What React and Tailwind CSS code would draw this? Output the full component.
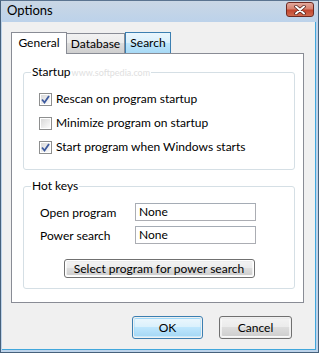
import React from "react";

const font = { fontFamily: 'Lato, "Liberation Sans", sans-serif' };

const Check = ({ checked }) => (
  <span className="w-[13px] h-[13px] border border-[#8e8f8f] bg-white p-px flex-shrink-0">
    <span className="w-full h-full flex items-center justify-center bg-gradient-to-br from-[#d9d9d9] to-[#fbfbfb]">
      {checked && (
        <svg width="9" height="9" viewBox="0 0 9 9">
          <path d="M1 4.5 L3.5 7.5 L8 1" fill="none" stroke="#3d5a9e" strokeWidth="1.8" />
        </svg>
      )}
    </span>
  </span>
);

const CheckRow = ({ checked, label }) => (
  <label className="h-[24px] flex items-center gap-[4px]">
    <Check checked={checked} />
    <span>{label}</span>
  </label>
);

const Field = ({ label, value }) => (
  <div className="h-[18px] flex items-center">
    <span className="w-[95px] pt-[2px]">{label}</span>
    <div className="w-[121px] h-[18px] border border-[#abadb3] border-t-[#a5acb5] bg-white px-[3px] flex items-center">
      {value}
    </div>
  </div>
);

const WinButton = ({ children, primary, className = "" }) => (
  <button
    className={
      "rounded-[3px] border p-px " +
      (primary ? "border-[#3c7fb1] " : "border-[#707070] ") +
      className
    }
  >
    <span
      className={
        "w-full h-full flex items-center justify-center rounded-[2px] " +
        (primary
          ? "bg-[linear-gradient(#eaf6fd_0%,#d9f0fc_50%,#bee6fd_50%,#a7d9f5_100%)] border border-[#94dafc]/40"
          : "bg-[linear-gradient(#f2f2f2_0%,#ebebeb_50%,#dddddd_50%,#cfcfcf_100%)] border border-white/60")
      }
    >
      {children}
    </span>
  </button>
);

export default function App() {
  return (
    <div
      className="w-[319px] h-[353px] flex flex-col bg-[#bdd3ea] border border-[#46617c] border-t-[#5b7490] text-[12px] text-black"
      style={font}
    >
      {/* Title bar */}
      <div className="h-[21px] flex items-center justify-between pl-[6px] pr-[4px] bg-[linear-gradient(#cad7e5,#bcd2ea)]">
        <span className="text-[13px] -mt-[2px]">Options</span>
        <button className="w-[28px] h-[15px] -mt-[4px] rounded-[3px] border border-[#6e2a22] bg-[linear-gradient(#e2a89c_0%,#d7826f_45%,#c4462f_55%,#d06a4e_100%)] flex items-center justify-center">
          <svg width="12" height="10" viewBox="0 0 12 10">
            <path d="M2 1.5 L10 8.5 M10 1.5 L2 8.5" stroke="#4a1a14" strokeWidth="3.4" strokeLinecap="round" />
            <path d="M2 1.5 L10 8.5 M10 1.5 L2 8.5" stroke="#ffffff" strokeWidth="2" strokeLinecap="round" />
          </svg>
        </button>
      </div>

      {/* Client area */}
      <div className="flex-1 mx-[1px] mr-[2px] mb-[2px] bg-[#f0f0f0] border-r border-b border-[#41a7dc] flex flex-col pl-[9px] pr-[11px] pt-[9px]">
        {/* Tabs */}
        <div className="flex items-end h-[22px]">
          <div className="w-[56px] h-[22px] bg-white border border-b-0 border-[#898c95] flex items-center justify-center pb-[1px] relative z-10 -mb-px">
            General
          </div>
          <div className="w-[58px] h-[20px] border border-l-0 border-b-0 border-[#898c95] bg-[linear-gradient(#f2f2f2_0%,#ebebeb_50%,#dddddd_50%,#cfcfcf_100%)] flex items-center justify-center pt-[1px]">
            Database
          </div>
          <div className="w-[46px] h-[21px] border border-b-0 border-[#3c7fb1] bg-[linear-gradient(#eaf6fd_0%,#d9f0fc_50%,#bee6fd_50%,#a7d9f5_100%)] flex items-center justify-center">
            Search
          </div>
        </div>

        {/* Tab page */}
        <div className="h-[250px] bg-white border border-[#898c95] flex flex-col pl-[11px] pr-[8px] pt-[10px]">
          <fieldset className="border border-[#d5dfe5] rounded-[3px] pl-[15px] pt-[6px] pb-[10px]">
            <legend className="-ml-[8px] px-px leading-[16px]">
              Startup<span className="text-[9px] text-[#e0e0e0] ml-[1px]">www.softpedia.com</span>
            </legend>
            <CheckRow checked label="Rescan on program startup" />
            <CheckRow label="Minimize program on startup" />
            <CheckRow checked label="Start program when Windows starts" />
          </fieldset>

          <fieldset className="mt-[8px] border border-[#d5dfe5] rounded-[3px] pl-[16px] pt-[9px] pb-[10px] flex flex-col gap-[5px]">
            <legend className="-ml-[9px] px-px leading-[16px]">Hot keys</legend>
            <Field label="Open program" value="None" />
            <Field label="Power search" value="None" />
            <div className="flex justify-center pr-[16px] mt-[10px]">
              <WinButton className="w-[191px] h-[19px]">Select program for power search</WinButton>
            </div>
          </fieldset>
        </div>

        {/* Dialog buttons */}
        <div className="flex justify-end gap-[16px] mt-[13px] pr-[12px]">
          <WinButton primary className="w-[71px] h-[23px]">OK</WinButton>
          <WinButton className="w-[73px] h-[23px]">Cancel</WinButton>
        </div>
      </div>
    </div>
  );
}
